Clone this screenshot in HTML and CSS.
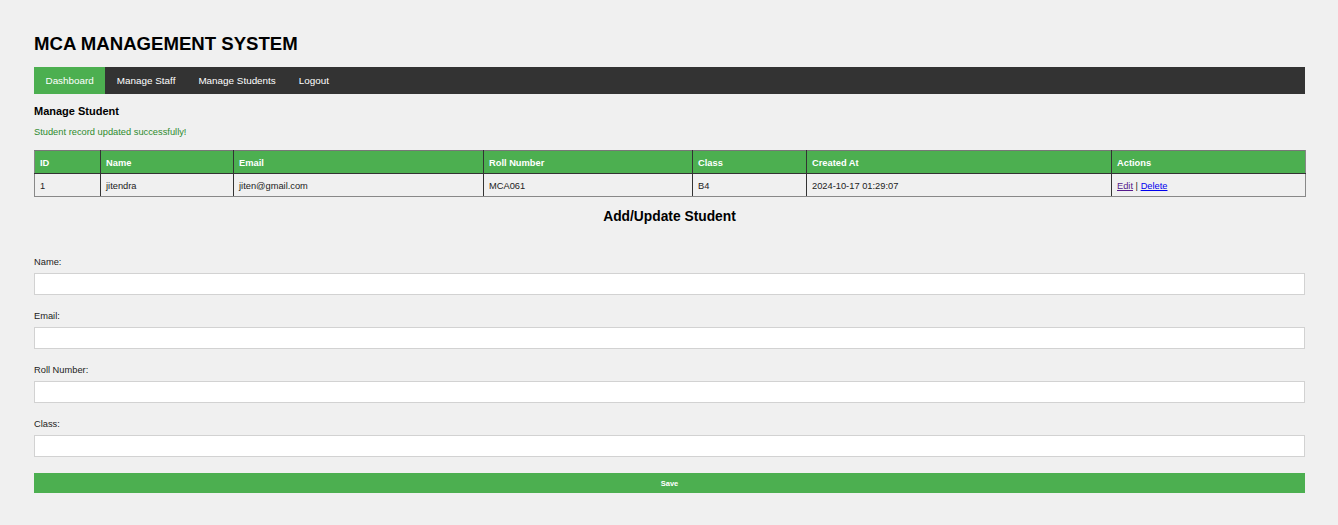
FILE: index.html
```html
<!DOCTYPE html>
<html lang="en">
<head>
<meta charset="utf-8">
<title>MCA Management System</title>
<link rel="stylesheet" href="styles.css">
</head>
<body>
<div class="page">
  <h1 class="title">MCA MANAGEMENT SYSTEM</h1>
  <nav class="nav">
    <a class="nav-link active" href="#">Dashboard</a>
    <a class="nav-link" href="#">Manage Staff</a>
    <a class="nav-link" href="#">Manage Students</a>
    <a class="nav-link" href="#">Logout</a>
  </nav>
  <h2 class="section-title">Manage Student</h2>
  <p class="success">Student record updated successfully!</p>
  <table class="data-table">
    <colgroup>
      <col class="c-id"><col class="c-name"><col class="c-email"><col class="c-roll"><col class="c-class"><col class="c-created"><col class="c-actions">
    </colgroup>
    <thead>
      <tr><th>ID</th><th>Name</th><th>Email</th><th>Roll Number</th><th>Class</th><th>Created At</th><th>Actions</th></tr>
    </thead>
    <tbody>
      <tr><td>1</td><td>jitendra</td><td>jiten@gmail.com</td><td>MCA061</td><td>B4</td><td>2024-10-17 01:29:07</td><td><a class="visited" href="#">Edit</a> | <a class="link" href="#">Delete</a></td></tr>
    </tbody>
  </table>
  <h2 class="form-title">Add/Update Student</h2>
  <form class="form">
    <label class="label">Name:</label>
    <input class="input" type="text">
    <label class="label">Email:</label>
    <input class="input" type="text">
    <label class="label">Roll Number:</label>
    <input class="input" type="text">
    <label class="label">Class:</label>
    <input class="input" type="text">
    <button class="save" type="button">Save</button>
  </form>
</div>
</body>
</html>
```
FILE: styles.css
```css
html, body {
  margin: 0;
  padding: 0;
  background: #f0f0f0;
  font-family: "Liberation Sans", Arial, sans-serif;
  color: #111;
}
.page {
  padding: 33px 33px 0 34px;
  display: flex;
  flex-direction: column;
}
.title {
  margin: 0;
  font-size: 18.6px;
  line-height: 22px;
  font-weight: bold;
  color: #000;
}
.nav {
  margin-top: 12px;
  height: 27px;
  background: #333;
  display: flex;
}
.nav-link {
  display: block;
  padding: 0 11.5px;
  line-height: 27px;
  font-size: 9.9px;
  color: #fff;
  text-decoration: none;
}
.nav-link.active {
  background: #4caf50;
}
.section-title {
  margin: 11px 0 0;
  font-size: 11px;
  line-height: 13px;
  font-weight: bold;
  color: #000;
}
.success {
  margin: 9px 0 0;
  font-size: 9.3px;
  line-height: 11px;
  color: #2e8b2e;
}
.data-table {
  margin-top: 12px;
  width: 1271px;
  table-layout: fixed;
  border-collapse: collapse;
  font-size: 9.3px;
  line-height: 12px;
}
.c-id { width: 66px; }
.c-name { width: 133px; }
.c-email { width: 250px; }
.c-roll { width: 209px; }
.c-class { width: 114px; }
.c-created { width: 305px; }
.c-actions { width: 194px; }
.data-table th,
.data-table td {
  border: 1px solid #333;
  padding: 6px 5px 4px;
  text-align: left;
  white-space: nowrap;
}
.data-table th {
  background: #4caf50;
  color: #fff;
  font-weight: bold;
}
.data-table td {
  color: #222;
}
.data-table th:first-child,
.data-table td:first-child { border-left-color: #888; }
.data-table th:last-child,
.data-table td:last-child { border-right-color: #888; }
.data-table th { border-top-color: #777; }
.data-table tbody td { border-bottom-color: #888; }
.visited { color: #551a8b; }
.link { color: #0000ee; }
.form-title {
  margin: 12px 0 0;
  text-align: center;
  font-size: 13.8px;
  line-height: 16px;
  font-weight: bold;
  color: #000;
}
.form {
  margin: 32px 0 0;
  display: flex;
  flex-direction: column;
}
.label {
  font-size: 9.3px;
  line-height: 11px;
  color: #222;
  margin-bottom: 5px;
}
.input {
  box-sizing: border-box;
  width: 100%;
  height: 22px;
  margin: 0 0 16px;
  border: 1px solid #d2d2d2;
  background: #fff;
  padding: 0 4px;
  font-family: inherit;
}
.save {
  width: 100%;
  height: 20px;
  border: none;
  background: #4caf50;
  color: #fff;
  font-family: inherit;
  font-weight: bold;
  font-size: 7.5px;
  padding: 0;
}
```
